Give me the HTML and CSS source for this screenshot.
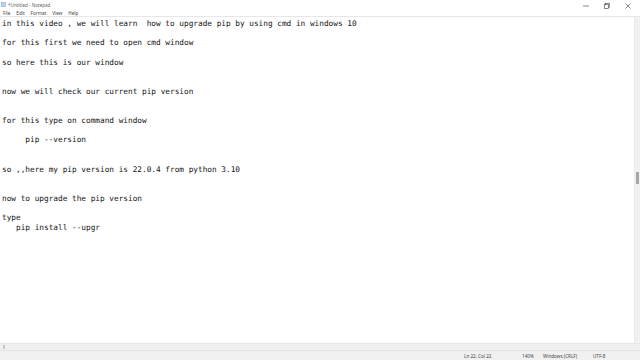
FILE: index.html
```html
<!DOCTYPE html>
<html>
<head>
<meta charset="utf-8">
<link rel="stylesheet" href="styles.css">
</head>
<body>
<div class="window">
  <div class="titlebar">
    <div class="title">
      <svg class="appicon" width="5" height="5" viewBox="0 0 5 5"><rect x="0.5" y="0.5" width="4" height="4" fill="#bcd6ee" stroke="#7fa8cf" stroke-width="0.6"/></svg>
      <span>*Untitled - Notepad</span>
    </div>
    <div class="controls">
      <svg class="ctl" width="8" height="8" viewBox="0 0 8 8"><line x1="1" y1="4" x2="7" y2="4" stroke="#555" stroke-width="0.7"/></svg>
      <svg class="ctl" width="8" height="8" viewBox="0 0 8 8"><rect x="2.3" y="1.3" width="4" height="4" fill="none" stroke="#555" stroke-width="0.7"/><rect x="1.3" y="2.5" width="4" height="4" fill="#fff" stroke="#555" stroke-width="0.7"/></svg>
      <svg class="ctl" width="8" height="8" viewBox="0 0 8 8"><path d="M1.5 1.5L6.5 6.5M6.5 1.5L1.5 6.5" stroke="#555" stroke-width="0.7"/></svg>
    </div>
  </div>
  <div class="menubar">
    <span>File</span><span>Edit</span><span>Format</span><span>View</span><span>Help</span>
  </div>
  <div class="main">
    <pre class="editor">in this video , we will learn  how to upgrade pip by using cmd in windows 10

for this first we need to open cmd window

so here this is our window


now we will check our current pip version


for this type on command window

     pip --version


so ,,here my pip version is 22.0.4 from python 3.10


now to upgrade the pip version

type
   pip install --upgr</pre>
    <div class="vscroll"><div class="vthumb"></div></div>
  </div>
  <div class="hscroll"><div class="harrow"></div></div>
  <div class="statusbar">
    <span class="st st-pos">Ln 22, Col 22</span>
    <span class="st st-zoom">140%</span>
    <span class="st st-eol">Windows (CRLF)</span>
    <span class="st st-enc">UTF-8</span>
  </div>
</div>
</body>
</html>
```
FILE: styles.css
```css
* { box-sizing: border-box; }
html, body { margin: 0; padding: 0; }
body { width: 640px; height: 360px; overflow: hidden; background: #fff; font-family: "Segoe UI", "Noto Sans", "Liberation Sans", sans-serif; }
.window { display: flex; flex-direction: column; width: 640px; height: 360px; }
.titlebar { height: 9px; display: flex; justify-content: space-between; align-items: center; background: #fff; }
.title { display: flex; align-items: center; gap: 2px; padding-left: 1px; font-size: 4.6px; color: #666; }
.appicon { display: block; }
.controls { display: flex; gap: 13px; padding-right: 8px; margin-top: 2px; }
.ctl { display: block; }
.menubar { height: 8px; display: flex; align-items: center; gap: 6px; padding-left: 3px; font-size: 4.6px; color: #444; border-bottom: 1px solid #e6e6e6; }
.main { flex: 1; display: flex; min-height: 0; }
.editor { flex: 1; margin: 0; padding: 2px 0 0 2px; font-family: "DejaVu Sans Mono", "Liberation Mono", monospace; font-size: 7.75px; line-height: 9.71px; color: #151515; white-space: pre; overflow: hidden; }
.vscroll { width: 6px; background: #f0f0f0; border-left: 1px solid #e8e8e8; display: flex; flex-direction: column; padding-top: 155px; align-items: center; }
.vthumb { width: 3px; height: 12px; background: #a6a6a6; }
.hscroll { height: 7px; background: #f0f0f0; border-top: 1px solid #e6e6e6; display: flex; align-items: center; padding-left: 3px; }
.harrow { width: 2px; height: 4px; background: #c8c8c8; }
.statusbar { height: 10px; background: #f0f0f0; border-top: 1px solid #e3e3e3; display: flex; align-items: center; font-size: 4.6px; color: #444; }
.st { display: block; }
.st-pos { margin-left: 464px; width: 58px; }
.st-zoom { width: 21px; }
.st-eol { width: 50px; }
.st-enc { }
```
